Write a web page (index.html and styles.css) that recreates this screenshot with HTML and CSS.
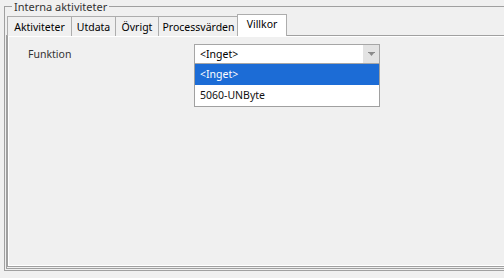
FILE: index.html
```html
<!DOCTYPE html>
<html>
<head>
<meta charset="utf-8">
<link rel="stylesheet" href="styles.css">
</head>
<body>
<fieldset class="group">
  <legend class="group-title">Interna aktiviteter</legend>
  <div class="tabctl">
    <div class="tabstrip">
      <div class="tab tab-akt">Aktiviteter</div>
      <div class="tab tab-utd">Utdata</div>
      <div class="tab tab-ovr">Övrigt</div>
      <div class="tab tab-pro">Processvärden</div>
      <div class="tab tab-vil selected">Villkor</div>
    </div>
    <div class="page">
      <div class="panel">
        <div class="row">
          <label class="lbl">Funktion</label>
          <div class="combo-wrap">
            <div class="combo">
              <span class="combo-text">&lt;Inget&gt;</span>
              <span class="combo-btn">
                <svg width="7" height="5" viewBox="0 0 7 5"><rect x="0" y="0" width="7" height="1" fill="#8a8a8a"/><polygon points="1,1 6,1 3.5,4" fill="#8a8a8a"/></svg>
              </span>
            </div>
            <ul class="droplist">
              <li class="item hl">&lt;Inget&gt;</li>
              <li class="item">5060-UNByte</li>
            </ul>
          </div>
        </div>
      </div>
    </div>
  </div>
</fieldset>
</body>
</html>
```

FILE: styles.css
```css
html, body {
  margin: 0;
  padding: 0;
  background: #f0f0f0;
  overflow: hidden;
  width: 504px;
  height: 278px;
}
body {
  font-family: "Noto Sans", "Liberation Sans", sans-serif;
  font-size: 10.5px;
  color: #000;
}
.group {
  margin: 0 0 0 4px;
  padding: 0 0 1px 1px;
  border: 1px solid #a0a0a0;
  border-right: none;
  width: 500px;
  box-sizing: border-box;
}
.group-title {
  margin-left: 6px;
  padding: 0 2px;
  line-height: 13px;
  font-size: 11px;
  color: #333;
}
.tabctl {
  display: flex;
  flex-direction: column;
  margin-top: 1px;
}
.tabstrip {
  display: flex;
  align-items: flex-end;
  height: 22px;
  margin-left: 1px;
  margin-bottom: -1px;
  position: relative;
  z-index: 1;
}
.tab {
  box-sizing: border-box;
  height: 20px;
  border: 1px solid #adadad;
  border-bottom: none;
  border-right: none;
  background: #f0f0f0;
  display: flex;
  align-items: center;
  justify-content: center;
  line-height: 13px;
  padding-top: 2px;
}
.tab-akt { width: 64px; }
.tab-utd { width: 44px; }
.tab-ovr { width: 43px; }
.tab-pro { width: 81px; border-right: 1px solid #adadad; }
.tab-vil { width: 50px; }
.tab.selected {
  height: 22px;
  margin-left: -2px;
  border-right: 1px solid #adadad;
  background: #ffffff;
  align-items: flex-start;
  padding-top: 3px;
}
.page {
  border: 1px solid #a0a0a0;
  border-right: none;
  height: 234px;
  box-sizing: border-box;
  display: flex;
  flex-direction: column;
  padding-bottom: 1px;
}
.panel {
  flex: 1;
  border-left: 1px solid #a0a0a0;
  border-bottom: 1px solid #a0a0a0;
  box-shadow: inset 1px 0 0 #ffffff, inset 0 1px 0 #ffffff, inset 0 -1px 0 #ffffff;
  background: #f0f0f0;
  padding: 8px 0 0 20px;
}
.row {
  display: grid;
  grid-template-columns: 166px 186px;
  align-items: start;
}
.lbl {
  color: #333;
  line-height: 20px;
}
.combo-wrap {
  position: relative;
}
.combo {
  box-sizing: border-box;
  height: 20px;
  border: 1px solid #a6a6a6;
  background: #fff;
  display: flex;
  align-items: center;
}
.combo-text {
  flex: 1;
  padding-left: 5px;
}
.combo-btn {
  width: 16px;
  align-self: stretch;
  background: #e3e3e3;
  display: flex;
  align-items: center;
  justify-content: center;
  padding-top: 1px;
  box-sizing: border-box;
}
.droplist {
  position: absolute;
  top: 20px;
  left: 0;
  width: 186px;
  box-sizing: border-box;
  margin: 0;
  padding: 0;
  list-style: none;
  background: #fff;
  border: 1px solid #a0a0a0;
  border-top: none;
}
.item {
  height: 21px;
  line-height: 21px;
  padding-left: 5px;
  color: #111;
}
.item.hl {
  background: #1c6cd6;
  color: #fff;
}
```
